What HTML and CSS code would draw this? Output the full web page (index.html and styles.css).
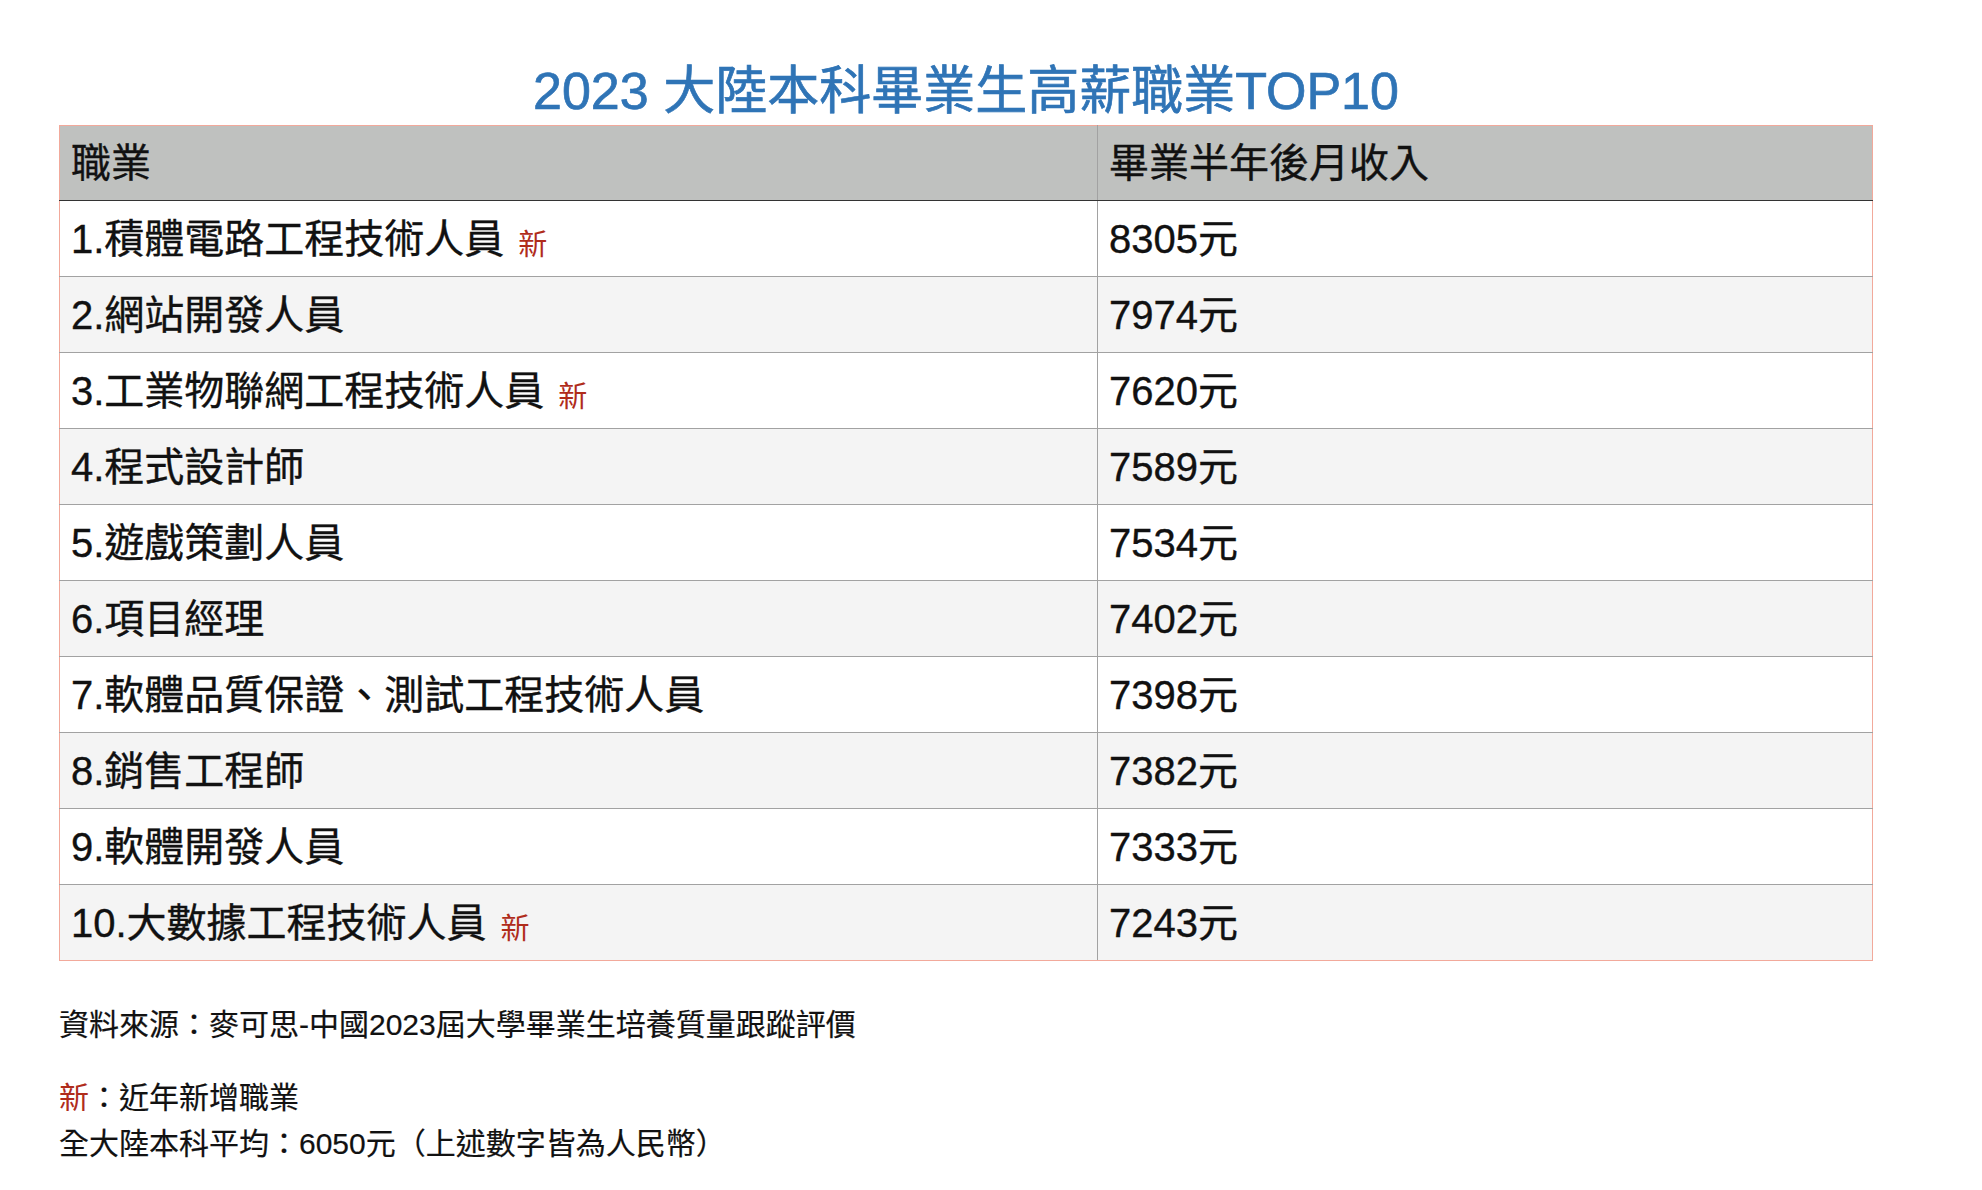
FILE: index.html
```html
<!DOCTYPE html>
<html lang="zh-Hant">
<head>
<meta charset="utf-8">
<title>2023 大陸本科畢業生高薪職業TOP10</title>
<link rel="stylesheet" href="styles.css">
</head>
<body>
<div class="page">
  <h1 class="title">2023 大陸本科畢業生高薪職業TOP10</h1>
  <table class="salary">
    <thead>
      <tr><th class="col-job">職業</th><th class="col-pay">畢業半年後月收入</th></tr>
    </thead>
    <tbody>
      <tr><td>1.積體電路工程技術人員<span class="new">新</span></td><td>8305元</td></tr>
      <tr><td>2.網站開發人員</td><td>7974元</td></tr>
      <tr><td>3.工業物聯網工程技術人員<span class="new">新</span></td><td>7620元</td></tr>
      <tr><td>4.程式設計師</td><td>7589元</td></tr>
      <tr><td>5.遊戲策劃人員</td><td>7534元</td></tr>
      <tr><td>6.項目經理</td><td>7402元</td></tr>
      <tr><td>7.軟體品質保證、測試工程技術人員</td><td>7398元</td></tr>
      <tr><td>8.銷售工程師</td><td>7382元</td></tr>
      <tr><td>9.軟體開發人員</td><td>7333元</td></tr>
      <tr><td>10.大數據工程技術人員<span class="new">新</span></td><td>7243元</td></tr>
    </tbody>
  </table>
  <div class="notes">
    <p class="source">資料來源：麥可思-中國2023屆大學畢業生培養質量跟蹤評價</p>
    <p class="legend"><span class="new-label">新</span>：近年新增職業<br>全大陸本科平均：6050元（上述數字皆為人民幣）</p>
  </div>
</div>
</body>
</html>
```

FILE: styles.css
```css
html, body {
  margin: 0;
  padding: 0;
  background: #ffffff;
}

body {
  font-family: "Liberation Sans", "Noto Sans CJK TC", sans-serif;
  color: #111111;
}

.page {
  width: 1814px;
  padding: 61px 0 0 59px;
}

.title {
  margin: 0 0 4px 0;
  height: 60px;
  line-height: 60px;
  font-size: 52px;
  font-weight: 400;
  -webkit-text-stroke: 0.7px #2f74b6;
  color: #2f74b6;
  text-align: center;
}

.salary {
  width: 1814px;
  border-collapse: collapse;
  border: 1px solid #f2a99b;
  font-size: 40px;
  -webkit-text-stroke: 0.35px #111111;
}

.salary th,
.salary td {
  height: 75px;
  padding: 0 11px;
  text-align: left;
  vertical-align: middle;
  font-weight: normal;
  line-height: 48px;
}

.salary th {
  height: 74px;
  background: #bfc1bf;
  border-bottom: 1px solid #333333;
}

.salary td {
  border-bottom: 1px solid #a2a2a2;
}

.salary tbody tr:last-child td {
  border-bottom: 1px solid #f2a99b;
}

.salary th + th,
.salary td + td {
  border-left: 1px solid #a2a2a2;
}

.col-job {
  width: 1015px;
}

.salary tbody tr:nth-child(even) td {
  background: #f4f4f4;
}

.new {
  margin-left: 14px;
  font-size: 29px;
  line-height: 1;
  vertical-align: -2px;
  color: #b02c1b;
  -webkit-text-stroke: 0;
}

.notes {
  margin-top: 41px;
  font-size: 30px;
  -webkit-text-stroke: 0.2px #111111;
}

.notes p {
  margin: 0;
  line-height: 46px;
}

.source {
  margin-bottom: 27px !important;
}

.new-label {
  color: #b02c1b;
  -webkit-text-stroke: 0;
}
```
